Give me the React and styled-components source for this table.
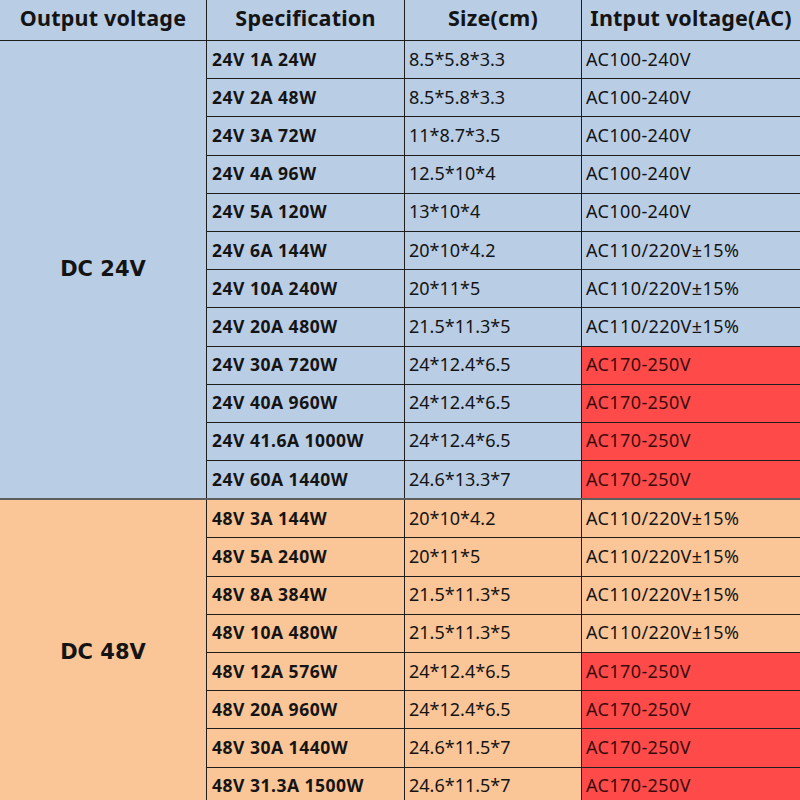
import React from "react";
import styled, { createGlobalStyle } from "styled-components";

const GlobalStyle = createGlobalStyle`
  html, body {
    margin: 0;
    padding: 0;
    background: #ffffff;
  }
  body {
    font-family: "Noto Sans", "Open Sans", "Liberation Sans", sans-serif;
    color: #141414;
  }
`;

const BLUE = "#b9cde5";
const ORANGE = "#fac597";
const RED = "#ff4a4a";

const groups = [
  {
    label: "DC 24V",
    bg: BLUE,
    rows: [
      ["24V 1A 24W", "8.5*5.8*3.3", "AC100-240V"],
      ["24V 2A 48W", "8.5*5.8*3.3", "AC100-240V"],
      ["24V 3A 72W", "11*8.7*3.5", "AC100-240V"],
      ["24V 4A 96W", "12.5*10*4", "AC100-240V"],
      ["24V 5A 120W", "13*10*4", "AC100-240V"],
      ["24V 6A 144W", "20*10*4.2", "AC110/220V±15%"],
      ["24V 10A 240W", "20*11*5", "AC110/220V±15%"],
      ["24V 20A 480W", "21.5*11.3*5", "AC110/220V±15%"],
      ["24V 30A 720W", "24*12.4*6.5", "AC170-250V", true],
      ["24V 40A 960W", "24*12.4*6.5", "AC170-250V", true],
      ["24V 41.6A 1000W", "24*12.4*6.5", "AC170-250V", true],
      ["24V 60A 1440W", "24.6*13.3*7", "AC170-250V", true],
    ],
  },
  {
    label: "DC 48V",
    bg: ORANGE,
    rows: [
      ["48V 3A 144W", "20*10*4.2", "AC110/220V±15%"],
      ["48V 5A 240W", "20*11*5", "AC110/220V±15%"],
      ["48V 8A 384W", "21.5*11.3*5", "AC110/220V±15%"],
      ["48V 10A 480W", "21.5*11.3*5", "AC110/220V±15%"],
      ["48V 12A 576W", "24*12.4*6.5", "AC170-250V", true],
      ["48V 20A 960W", "24*12.4*6.5", "AC170-250V", true],
      ["48V 30A 1440W", "24.6*11.5*7", "AC170-250V", true],
      ["48V 31.3A 1500W", "24.6*11.5*7", "AC170-250V", true],
    ],
  },
];

const Sheet = styled.div`
  width: 800px;
  height: 800px;
  overflow: hidden;
  background: ${BLUE};
`;

const HeaderRow = styled.div`
  display: grid;
  grid-template-columns: 207px 198px 177px 1fr;
  height: 40px;
  border-bottom: 1px solid #1e1e1e;
  background: ${BLUE};
`;

const HeadCell = styled.div`
  display: flex;
  align-items: center;
  justify-content: center;
  font-size: 21.5px;
  font-weight: 700;
  letter-spacing: 0.2px;
  border-right: ${(p) => (p.$last ? "none" : "1px solid #1e1e1e")};
  padding-bottom: 5px;
  box-sizing: border-box;
  white-space: nowrap;
`;

const Group = styled.div`
  display: grid;
  grid-template-columns: 207px 1fr;
  background: ${(p) => p.$bg};
  border-top: ${(p) => (p.$first ? "none" : "2px solid #5e5e5e")};
`;

const GroupLabel = styled.div`
  display: flex;
  align-items: center;
  justify-content: center;
  font-family: "DejaVu Sans", "Noto Sans", sans-serif;
  font-size: 21px;
  font-weight: 700;
  border-right: 1px solid #1e1e1e;
  padding-bottom: 2px;
`;

const Rows = styled.div`
  display: flex;
  flex-direction: column;
`;

const Row = styled.div`
  display: grid;
  grid-template-columns: 198px 177px 1fr;
  height: 37.2px;
  border-top: ${(p) => (p.$first ? "none" : "1px solid #1e1e1e")};
`;

const Cell = styled.div`
  display: flex;
  align-items: center;
  padding-left: ${(p) => (p.$bold ? "5px" : "4px")};
  font-size: ${(p) => (p.$bold ? "17.5px" : "18px")};
  font-weight: ${(p) => (p.$bold ? 700 : 400)};
  letter-spacing: ${(p) => (p.$bold ? "0.5px" : p.$last ? "0.4px" : "0")};
  background: ${(p) => (p.$red ? RED : "transparent")};
  border-right: ${(p) => (p.$last ? "none" : "1px solid #1e1e1e")};
  color: ${(p) => (p.$red ? "#3a0a0a" : "#141414")};
  white-space: nowrap;
  box-sizing: border-box;
  padding-bottom: 2px;
`;

export default function App() {
  return (
    <>
      <GlobalStyle />
      <Sheet>
        <HeaderRow>
          <HeadCell>Output voltage</HeadCell>
          <HeadCell>Specification</HeadCell>
          <HeadCell>Size(cm)</HeadCell>
          <HeadCell $last>Intput voltage(AC)</HeadCell>
        </HeaderRow>
        {groups.map((g, gi) => (
          <Group key={g.label} $bg={g.bg} $first={gi === 0}>
            <GroupLabel>{g.label}</GroupLabel>
            <Rows>
              {g.rows.map(([spec, size, input, red], ri) => (
                <Row key={spec} $first={ri === 0}>
                  <Cell $bold>{spec}</Cell>
                  <Cell>{size}</Cell>
                  <Cell $last $red={red}>
                    {input}
                  </Cell>
                </Row>
              ))}
            </Rows>
          </Group>
        ))}
      </Sheet>
    </>
  );
}
